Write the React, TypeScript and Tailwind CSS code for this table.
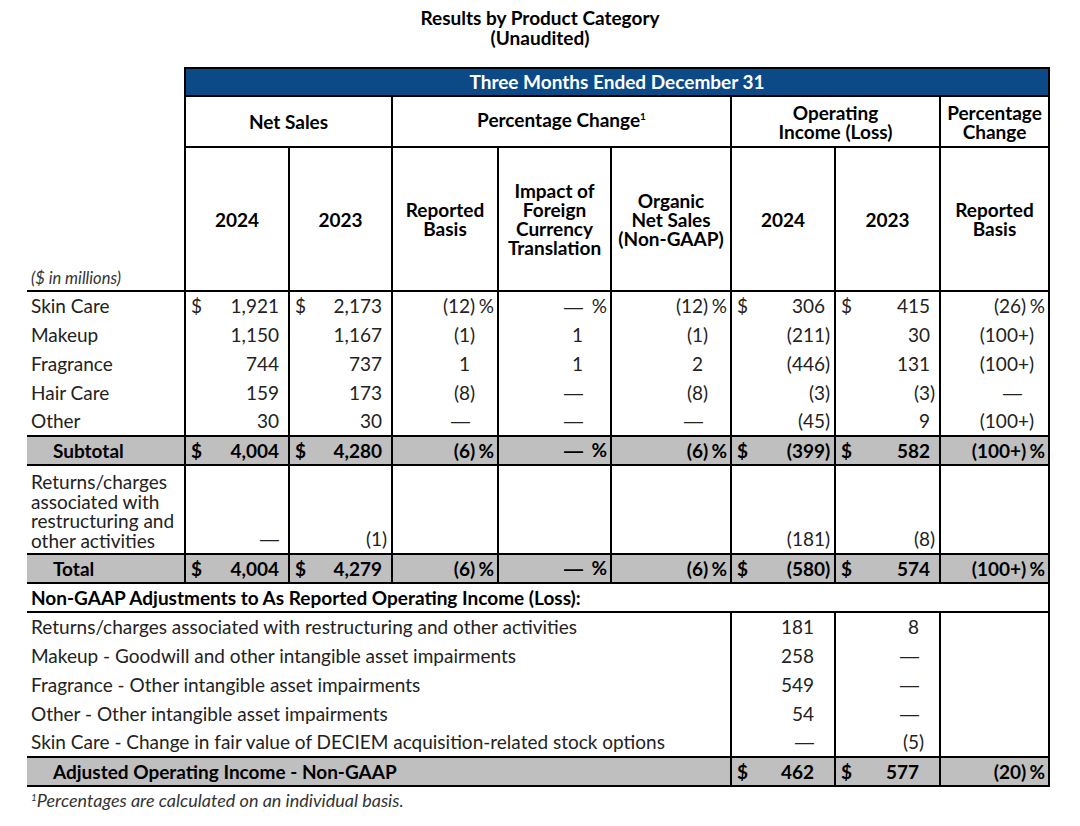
import React from "react";

type CellV = { v?: string; d?: boolean; pr?: string; raw?: boolean };

function splitVal(v: string) {
  let pct = false;
  let s = v;
  if (s.endsWith("%")) {
    pct = true;
    s = s.slice(0, -1);
  }
  let paren = "";
  if (s.endsWith(")")) {
    paren = ")";
    s = s.slice(0, -1);
  }
  return { core: s, paren, pct };
}

function Core({ s }: { s: string }) {
  if (s === "—") return <span className="font-['Liberation_Sans',sans-serif]">—</span>;
  return <span>{s}</span>;
}

function Num({ v = "", d = false, pctCol = false, pr = "pr-[3px]", raw = false }: { v?: string; d?: boolean; pctCol?: boolean; pr?: string; raw?: boolean }) {
  if (raw) {
    return (
      <div className={`flex justify-end whitespace-nowrap ${pr}`}>
        <Core s={v} />
      </div>
    );
  }
  const { core, paren, pct } = splitVal(v);
  return (
    <div className={`flex items-baseline justify-between pl-[5px] ${pr}`}>
      <span>{d ? "$" : ""}</span>
      <span className="flex items-baseline whitespace-nowrap">
        <Core s={core} />
        <span className="w-[6px] text-left">{paren}</span>
        {pctCol && <span className="w-[18px] text-right">{pct ? "%" : ""}</span>}
      </span>
    </div>
  );
}

const PCT = [false, false, true, true, true, false, false, true];

function BodyRow({ label, cells, gray = false, bold = false, top = false }: { label: string; cells: CellV[]; gray?: boolean; bold?: boolean; top?: boolean }) {
  const bg = gray ? "bg-[#bfbfbf] border-y-2 border-black" : "";
  return (
    <tr>
      <td className={`h-[29px] p-0 pl-[4px] whitespace-nowrap ${bg} ${top ? "border-t-2 border-black" : ""} ${bold ? "font-bold pl-[26px] text-black" : ""}`}>{label}</td>
      {cells.map((c, i) => (
        <td key={i} className={`h-[29px] p-0 border-x-2 border-black ${bg} ${top ? "border-t-2" : ""} ${bold ? "font-bold text-black" : ""}`}>
          <Num v={c.v} d={c.d} pctCol={PCT[i]} pr={c.pr} raw={c.raw} />
        </td>
      ))}
    </tr>
  );
}

function AdjRow({ label, cells, gray = false }: { label: string; cells: CellV[]; gray?: boolean }) {
  const bg = gray ? "bg-[#bfbfbf] border-y-2 border-black font-bold text-black" : "";
  return (
    <tr>
      <td colSpan={6} className={`h-[29px] p-0 whitespace-nowrap ${gray ? "pl-[26px]" : "pl-[4px]"} ${bg}`}>{label}</td>
      {cells.map((c, i) => (
        <td key={i} className={`h-[29px] p-0 border-x-2 border-black ${bg}`}>
          <Num v={c.v} d={c.d} pctCol={i === 2} pr={c.pr ?? (i === 2 ? "pr-[3px]" : "pr-[14px]")} />
        </td>
      ))}
    </tr>
  );
}

export default function App() {
  const hdr = "border-2 border-black p-0 text-center font-bold text-black leading-[19px]";
  return (
    <div className="w-[1080px] h-[826px] bg-white font-['Lato',sans-serif] text-[19px] leading-[22px] text-[#222]">
      <div className="pt-[8px] text-center font-bold text-[19px] leading-[20px] text-black">
        <div>Results by Product Category</div>
        <div>(Unaudited)</div>
      </div>
      <table className="mt-[19px] ml-[27px] w-[1022px] table-fixed border-collapse">
        <colgroup>
          <col className="w-[158px]" />
          <col className="w-[104px]" />
          <col className="w-[103px]" />
          <col className="w-[106px]" />
          <col className="w-[113px]" />
          <col className="w-[120px]" />
          <col className="w-[104px]" />
          <col className="w-[105px]" />
          <col className="w-[109px]" />
        </colgroup>
        <tbody>
          <tr>
            <td className="p-0 h-[28px]"></td>
            <td colSpan={8} className="h-[28px] border-2 border-black bg-[#0c4a87] p-0 text-center font-bold text-white leading-[20px]">
              Three Months Ended December 31
            </td>
          </tr>
          <tr>
            <td className="p-0 h-[51px]"></td>
            <td colSpan={2} className={`${hdr} h-[51px]`}>Net Sales</td>
            <td colSpan={3} className={hdr}>
              Percentage Change<span className="relative -top-[7px] text-[10px]">1</span>
            </td>
            <td colSpan={2} className={hdr}>
              Operating
              <br />
              Income (Loss)
            </td>
            <td className={hdr}>
              Percentage
              <br />
              Change
            </td>
          </tr>
          <tr>
            <td className="h-[144px] p-0 pl-[4px] pb-[2px] align-bottom italic text-[16.5px] leading-[20px] text-[#333]">($ in millions)</td>
            <td className={`${hdr} h-[144px]`}>2024</td>
            <td className={hdr}>2023</td>
            <td className={hdr}>
              Reported
              <br />
              Basis
            </td>
            <td className={hdr}>
              Impact of
              <br />
              Foreign
              <br />
              Currency
              <br />
              Translation
            </td>
            <td className={hdr}>
              Organic
              <br />
              Net Sales
              <br />
              (Non-GAAP)
            </td>
            <td className={hdr}>2024</td>
            <td className={hdr}>2023</td>
            <td className={hdr}>
              Reported
              <br />
              Basis
            </td>
          </tr>
          <BodyRow
            top
            label="Skin Care"
            cells={[
              { v: "1,921", d: true },
              { v: "2,173", d: true },
              { v: "(12)%" },
              { v: "—%" },
              { v: "(12)%" },
              { v: "306", d: true },
              { v: "415", d: true },
              { v: "(26)%" },
            ]}
          />
          <BodyRow
            label="Makeup"
            cells={[{ v: "1,150" }, { v: "1,167" }, { v: "(1)" }, { v: "1" }, { v: "(1)" }, { v: "(211)" }, { v: "30" }, { v: "(100+)", raw: true, pr: "pr-[14px]" }]}
          />
          <BodyRow
            label="Fragrance"
            cells={[{ v: "744" }, { v: "737" }, { v: "1" }, { v: "1" }, { v: "2" }, { v: "(446)" }, { v: "131" }, { v: "(100+)", raw: true, pr: "pr-[14px]" }]}
          />
          <BodyRow
            label="Hair Care"
            cells={[{ v: "159" }, { v: "173" }, { v: "(8)" }, { v: "—" }, { v: "(8)" }, { v: "(3)" }, { v: "(3)" }, { v: "—", raw: true, pr: "pr-[26px]" }]}
          />
          <BodyRow
            label="Other"
            cells={[{ v: "30" }, { v: "30" }, { v: "—" }, { v: "—" }, { v: "—" }, { v: "(45)" }, { v: "9" }, { v: "(100+)", raw: true, pr: "pr-[14px]" }]}
          />
          <BodyRow
            gray
            bold
            label="Subtotal"
            cells={[
              { v: "4,004", d: true },
              { v: "4,280", d: true },
              { v: "(6)%" },
              { v: "—%" },
              { v: "(6)%" },
              { v: "(399)", d: true },
              { v: "582", d: true },
              { v: "(100+)%" },
            ]}
          />
          <tr>
            <td className="h-[89px] p-0 pl-[4px] pt-[6px] align-top leading-[19.5px]">
              Returns/charges
              <br />
              associated with
              <br />
              restructuring and
              <br />
              other activities
            </td>
            {[{ v: "—" }, { v: "(1)" }, {}, {}, {}, { v: "(181)" }, { v: "(8)" }, {}].map((c: CellV, i) => (
              <td key={i} className="h-[89px] p-0 pb-[5px] align-bottom border-x-2 border-black leading-[19.5px]">
                <Num v={c.v} pctCol={PCT[i]} />
              </td>
            ))}
          </tr>
          <BodyRow
            gray
            bold
            label="Total"
            cells={[
              { v: "4,004", d: true },
              { v: "4,279", d: true },
              { v: "(6)%" },
              { v: "—%" },
              { v: "(6)%" },
              { v: "(580)", d: true },
              { v: "574", d: true },
              { v: "(100+)%" },
            ]}
          />
          <tr>
            <td colSpan={9} className="h-[29px] p-0 pl-[4px] border-y-2 border-r-2 border-black font-bold text-black whitespace-nowrap">
              Non-GAAP Adjustments to As Reported Operating Income (Loss):
            </td>
          </tr>
          <AdjRow label="Returns/charges associated with restructuring and other activities" cells={[{ v: "181" }, { v: "8" }, {}]} />
          <AdjRow label="Makeup - Goodwill and other intangible asset impairments" cells={[{ v: "258" }, { v: "—" }, {}]} />
          <AdjRow label="Fragrance - Other intangible asset impairments" cells={[{ v: "549" }, { v: "—" }, {}]} />
          <AdjRow label="Other - Other intangible asset impairments" cells={[{ v: "54" }, { v: "—" }, {}]} />
          <AdjRow label="Skin Care - Change in fair value of DECIEM acquisition-related stock options" cells={[{ v: "—" }, { v: "(5)" }, {}]} />
          <AdjRow gray label="Adjusted Operating Income - Non-GAAP" cells={[{ v: "462", d: true }, { v: "577", d: true }, { v: "(20)%" }]} />
        </tbody>
      </table>
      <div className="pl-[31px] pt-[3px] italic text-[18px] leading-[20px] text-[#333]">
        <span className="relative -top-[6px] text-[10px]">1</span>Percentages are calculated on an individual basis.
      </div>
    </div>
  );
}
